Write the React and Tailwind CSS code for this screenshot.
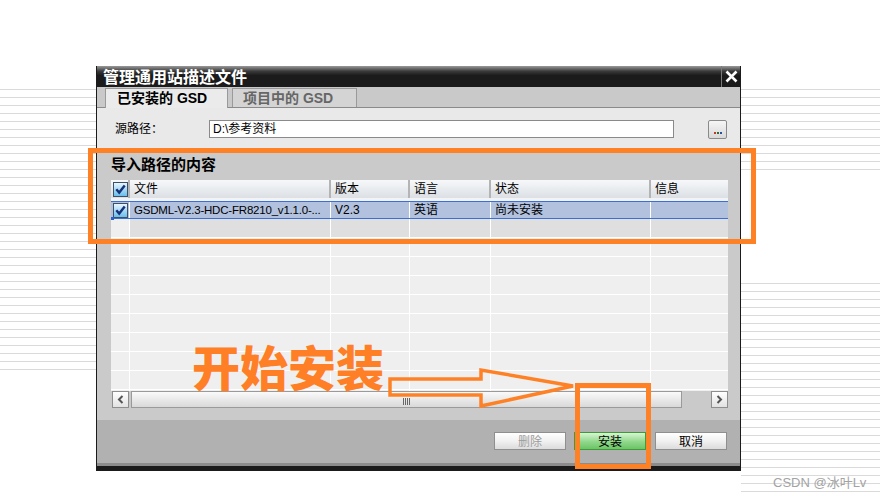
import React from 'react';

const COLS = 'grid grid-cols-[19px_201px_79px_81px_160px_77px]';
const STRIPES =
  'bg-[repeating-linear-gradient(to_bottom,#dadada_0px,#dadada_1px,transparent_1px,transparent_8px)]';

function Check() {
  return (
    <svg width="15" height="15" viewBox="0 0 15 15">
      <defs>
        <linearGradient id="cbfill" x1="0" y1="0" x2="0" y2="1">
          <stop offset="0" stopColor="#eef8ff" />
          <stop offset="1" stopColor="#62bdec" />
        </linearGradient>
      </defs>
      <rect x="0.5" y="0.5" width="14" height="14" fill="url(#cbfill)" stroke="#3f5066" />
      <path d="M3.3 7.3 L6.2 10.6 L11.7 3.6" fill="none" stroke="#17307a" strokeWidth="2.4" />
    </svg>
  );
}

function Btn({ children, tone }) {
  const base = 'w-[72px] h-[18px] flex items-center justify-center text-[12px] border';
  if (tone === 'green')
    return (
      <div className={`${base} border-[#3f9b3a] bg-[linear-gradient(#d9f5d2,#8fd88a_55%,#6cc466)] text-black`}>
        {children}
      </div>
    );
  return (
    <div
      className={`${base} border-[#8f8f8f] bg-[linear-gradient(#ffffff,#f1f1f1_50%,#dcdcdc)] ${
        tone === 'off' ? 'text-[#9c9c9c]' : 'text-black'
      }`}
    >
      {children}
    </div>
  );
}

function EmptyRow({ dark }) {
  return (
    <div className={`${COLS} h-[19px] border-b border-white`}>
      <div className="bg-[#efefef] border-r border-white" />
      {[0, 1, 2, 3, 4].map((i) => (
        <div
          key={i}
          className={`${dark ? 'bg-[#dfdfdf]' : 'bg-[#efefef]'} ${i < 4 ? 'border-r border-white' : ''}`}
        />
      ))}
    </div>
  );
}

export default function App() {
  const head = ['文件', '版本', '语言', '状态', '信息'];
  return (
    <div className="relative w-[880px] h-[496px] bg-white overflow-hidden flex font-['Liberation_Sans','Noto_Sans_CJK_SC',sans-serif]">
      {/* left page stripes */}
      <div className="w-[96px] pt-[89px]">
        <div className={`h-[282px] ${STRIPES}`} />
      </div>

      {/* dialog */}
      <div className="mt-[66px] w-[645px] h-[405px] flex flex-col border-x border-[#1b1b1b]">
        {/* title bar */}
        <div className="h-[21px] flex bg-[linear-gradient(#9a9a9a,#3a3a3a_25%,#1b1b1b_45%,#1b1b1b)]">
          <div className="flex-1 pl-[6px] text-white font-bold text-[16px] leading-[21px] font-['Noto_Sans_CJK_SC',sans-serif]">
            管理通用站描述文件
          </div>
          <div className="w-[19px] border-l border-[#7a7a7a] flex items-center justify-center">
            <svg width="13" height="13" viewBox="0 0 13 13">
              <path d="M1.5 1.5 L11.5 11.5 M11.5 1.5 L1.5 11.5" stroke="#fff" strokeWidth="2.6" />
            </svg>
          </div>
        </div>

        {/* tabs */}
        <div className="h-[21px] bg-[#c9c9c9] border-b border-[#8a8a8a] flex items-end pl-[8px] gap-[4px]">
          <div className="w-[123px] h-[20px] -mb-px bg-[#ebebeb] border-x border-t border-[#9a9a9a] flex items-center pl-[11px] text-[14px] font-bold text-black">
            已安装的 GSD
          </div>
          <div className="w-[125px] h-[19px] bg-[#d4d4d4] border-x border-t border-[#9a9a9a] flex items-center pl-[10px] text-[14px] font-bold text-[#666]">
            项目中的 GSD
          </div>
        </div>

        {/* source path */}
        <div className="h-[42px] bg-[#e9e9e9] flex items-start pt-[12px] pl-[18px]">
          <div className="w-[94px] text-[12px] leading-[18px] text-black">源路径：</div>
          <div className="w-[465px] h-[18px] bg-white border border-[#8a8a8a] pl-[3px] text-[12px] leading-[16px] text-black">
            D:\参考资料
          </div>
          <div className="ml-[34px] w-[19px] h-[19px] border border-[#8a8a8a] rounded-[2px] bg-[linear-gradient(#f6f6f6,#d8d8d8)] flex items-end justify-center pb-[4px] gap-[1px]">
            <span className="w-[2px] h-[2px] bg-[#c0392b]" />
            <span className="w-[2px] h-[2px] bg-[#2c6e2c]" />
            <span className="w-[2px] h-[2px] bg-[#2a4fa0]" />
          </div>
        </div>

        {/* content */}
        <div className="h-[270px] bg-[#cacaca] pl-[14px] pr-[12px] flex flex-col">
          <div className="h-[30px] pt-[5px] text-[15px] font-bold text-black leading-[20px]">
            导入路径的内容
          </div>
          <div className="bg-[#f3f3f3]">
            <div className={`${COLS} h-[18px] bg-[linear-gradient(#f7f8fa,#e9ecef_50%,#dcdfe3)] text-[12px] leading-[18px] text-black`}>
              <div className="flex items-center pl-[2px] border-r-2 border-[#b4b4b4]">
                <Check />
              </div>
              {head.map((h, i) => (
                <div key={h} className={`pl-[4px] ${i < 4 ? 'border-r-2 border-[#b4b4b4]' : ''}`}>
                  {h}
                </div>
              ))}
            </div>
            <div className="h-[193px] overflow-hidden pt-[3px]">
              <div className={`${COLS} relative h-[18px] bg-[#b2c2de] border-y border-[#3a6fd6] text-[12px] leading-[16px] text-black`}>
                <div className="flex items-center pl-[2px] border-r border-white">
                  <Check />
                </div>
                <div className="pl-[4px] border-r border-white whitespace-nowrap overflow-hidden text-[11.5px] tracking-[-0.2px]">
                  GSDML-V2.3-HDC-FR8210_v1.1.0-...
                </div>
                <div className="pl-[4px] border-r border-white">V2.3</div>
                <div className="pl-[4px] border-r border-white">英语</div>
                <div className="pl-[4px] border-r border-white">尚未安装</div>
                <div />
                <span className="absolute left-0 -bottom-[2px] w-[3px] h-[3px] bg-[#2a5fd0]" />
              </div>
              <EmptyRow dark />
              {[0, 1, 2, 3, 4, 5, 6, 7, 8].map((i) => (
                <EmptyRow key={i} />
              ))}
            </div>
          </div>

          {/* horizontal scrollbar */}
          <div className="h-[17px] flex items-stretch">
            <div className="w-[17px] ml-px border border-[#8e8e8e] bg-[linear-gradient(#ffffff,#e2e2e2)] flex items-center justify-center">
              <svg width="7" height="9" viewBox="0 0 7 9">
                <path d="M5.5 1 L2 4.5 L5.5 8" fill="none" stroke="#555" strokeWidth="2" />
              </svg>
            </div>
            <div className="w-[551px] ml-[2px] border border-[#9a9a9a] bg-[linear-gradient(#fafafa,#e6e6e6_60%,#d9d9d9)] flex items-end justify-center pb-[2px]">
              <div className="flex gap-[1px] h-[7px]">
                <span className="w-px bg-[#666]" />
                <span className="w-px bg-[#666]" />
                <span className="w-px bg-[#666]" />
                <span className="w-px bg-[#666]" />
              </div>
            </div>
            <div className="flex-1" />
            <div className="w-[17px] border border-[#8e8e8e] bg-[linear-gradient(#ffffff,#e2e2e2)] flex items-center justify-center">
              <svg width="7" height="9" viewBox="0 0 7 9">
                <path d="M1.5 1 L5 4.5 L1.5 8" fill="none" stroke="#555" strokeWidth="2" />
              </svg>
            </div>
          </div>
        </div>

        {/* footer */}
        <div className="h-[43px] bg-[#b1b1b1] flex justify-end items-start pt-[12px] pr-[13px] gap-[8px] font-['Noto_Sans_CJK_SC',sans-serif]">
          <Btn tone="off">删除</Btn>
          <Btn tone="green">安装</Btn>
          <div className="ml-px">
            <Btn>取消</Btn>
          </div>
        </div>
        <div className="h-[3px] bg-[#8c8c8c]" />
        <div className="flex-1 bg-[#1b1b1b]" />
      </div>

      {/* right page stripes */}
      <div className="flex-1 flex flex-col pt-[89px]">
        <div className={`h-[82px] ${STRIPES}`} />
        <div className="h-[112px]" />
        <div className={`h-[210px] ${STRIPES}`} />
      </div>

      {/* watermark */}
      <div className="absolute left-[773px] top-[473px] text-[13px] text-[#a3a3a3] font-['Liberation_Sans','Noto_Sans_CJK_SC',sans-serif]">
        CSDN @冰叶Lv
      </div>

      {/* annotations */}
      <div className="absolute left-[88px] top-[148px] w-[668px] h-[96px] border-[5px] border-[#ff8126]" />
      <div className="absolute left-[575px] top-[383px] w-[76px] h-[86px] border-[5px] border-[#ff8126]" />
      <div className="absolute left-[192px] top-[341px] text-[48px] leading-none font-black text-[#ff7f27] font-['Noto_Sans_CJK_SC',sans-serif]">
        开始安装
      </div>
      <svg className="absolute left-0 top-0" width="880" height="496" viewBox="0 0 880 496">
        <path
          d="M390 379 L481 379 L481 370 L573 386 L481 406 L481 395 L390 395 Z"
          fill="none"
          stroke="#ff8126"
          strokeWidth="3.5"
          strokeLinejoin="miter"
        />
      </svg>
    </div>
  );
}
